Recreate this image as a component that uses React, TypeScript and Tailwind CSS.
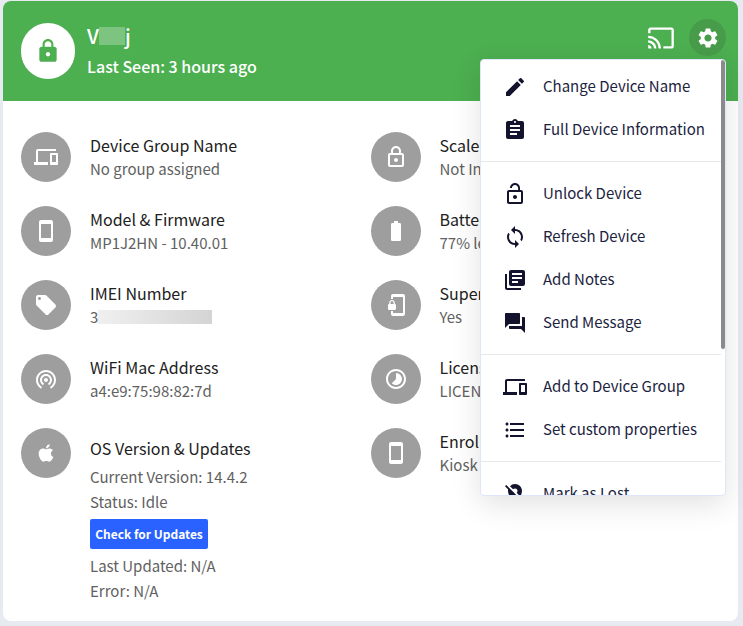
import React from 'react';
import { FaApple } from 'react-icons/fa';
import {
  MdAssignment,
  MdBatteryFull,
  MdCast,
  MdDevices,
  MdEdit,
  MdFormatListBulleted,
  MdLibraryBooks,
  MdLocalOffer,
  MdLock,
  MdLockOpen,
  MdLoop,
  MdLocationOff,
  MdOutlineLock,
  MdPhonelinkLock,
  MdQuestionAnswer,
  MdSettings,
  MdSmartphone,
  MdStayCurrentPortrait,
  MdTimelapse,
  MdWifiTethering,
} from 'react-icons/md';

type Info = { icon: React.ReactNode; title: string; value: React.ReactNode };

const leftRows: Info[] = [
  { icon: <MdDevices size={24} />, title: 'Device Group Name', value: 'No group assigned' },
  { icon: <MdSmartphone size={24} />, title: 'Model & Firmware', value: 'MP1J2HN - 10.40.01' },
  {
    icon: <MdLocalOffer size={24} />,
    title: 'IMEI Number',
    value: (
      <span className="flex items-center">
        3
        <span className="h-[14px] w-[114px] bg-gradient-to-r from-[#f0f0f0] to-[#d4d4d4]" />
      </span>
    ),
  },
  { icon: <MdWifiTethering size={24} />, title: 'WiFi Mac Address', value: 'a4:e9:75:98:82:7d' },
];

const rightRows: Info[] = [
  { icon: <MdOutlineLock size={24} />, title: 'Scale', value: 'Not Installed' },
  { icon: <MdBatteryFull size={24} />, title: 'Battery', value: '77% left' },
  { icon: <MdPhonelinkLock size={24} />, title: 'Supervised', value: 'Yes' },
  { icon: <MdTimelapse size={24} />, title: 'License', value: 'LICENSED' },
  { icon: <MdStayCurrentPortrait size={24} />, title: 'Enrollment', value: 'Kiosk' },
];

const menuGroups = [
  [
    { icon: <MdEdit size={24} />, label: 'Change Device Name' },
    { icon: <MdAssignment size={24} />, label: 'Full Device Information' },
  ],
  [
    { icon: <MdLockOpen size={24} />, label: 'Unlock Device' },
    { icon: <MdLoop size={24} />, label: 'Refresh Device' },
    { icon: <MdLibraryBooks size={24} />, label: 'Add Notes' },
    { icon: <MdQuestionAnswer size={24} />, label: 'Send Message' },
  ],
  [
    { icon: <MdDevices size={24} />, label: 'Add to Device Group' },
    { icon: <MdFormatListBulleted size={24} />, label: 'Set custom properties' },
  ],
  [{ icon: <MdLocationOff size={24} />, label: 'Mark as Lost' }],
];

const Row = ({ icon, title, value }: Info) => (
  <div className="flex h-[50px] items-center gap-[19px]">
    <div className="flex h-[50px] w-[50px] shrink-0 items-center justify-center rounded-full bg-[#9e9e9e] text-white">
      {icon}
    </div>
    <div className="whitespace-nowrap">
      <div className="text-[16px] leading-[23px] text-[#212121]">{title}</div>
      <div className="text-[15px] leading-[23px] text-[#616161]">{value}</div>
    </div>
  </div>
);

export default function App() {
  return (
    <div
      className="h-[626px] w-[743px] overflow-hidden bg-[#e8eaf2] pt-px pl-[3px]"
      style={{ fontFamily: '"Noto Sans CJK KR", sans-serif' }}
    >
      <div className="relative h-[620px] w-[735px] rounded-lg bg-white">
        {/* Header */}
        <div className="flex h-[100px] items-center justify-between rounded-t-lg bg-[#4caf50] pr-3 pl-[18px] text-white">
          <div className="flex items-center gap-3">
            <div className="flex h-[56px] w-[54px] items-center justify-center rounded-full bg-white text-[#4caf50]">
              <MdLock size={26} />
            </div>
            <div className="-mt-1">
              <div className="flex h-[30px] items-center text-[20px] font-medium">
                V<span className="h-[18px] w-[26px] bg-[#7cc47f]" />j
              </div>
              <div className="mt-[3px] text-[16px] font-medium">Last Seen: 3 hours ago</div>
            </div>
          </div>
          <div className="-mt-[27px] flex items-center gap-[14px]">
            <MdCast size={28} />
            <div className="flex h-[37px] w-[37px] items-center justify-center rounded-full bg-[#479c4a]">
              <MdSettings size={24} />
            </div>
          </div>
        </div>

        {/* Device details */}
        <div className="grid grid-cols-2 px-[18px] pt-[31px]">
          <div className="flex flex-col gap-6">
            {leftRows.map((r) => (
              <Row key={r.title} {...r} />
            ))}
            <div className="flex gap-[19px]">
              <div className="flex h-[50px] w-[50px] shrink-0 items-center justify-center rounded-full bg-[#9e9e9e] text-white">
                <FaApple size={20} />
              </div>
              <div className="text-[15px] leading-[24.5px] text-[#616161]">
                <div className="mb-[5px] pt-[9px] text-[16px] leading-[23px] text-[#212121]">OS Version &amp; Updates</div>
                <div>Current Version: 14.4.2</div>
                <div>Status: Idle</div>
                <button className="my-[5px] block h-[30px] w-[118px] rounded-[2px] bg-[#2962ff] text-[12px] font-bold text-white">
                  Check for Updates
                </button>
                <div>Last Updated: N/A</div>
                <div>Error: N/A</div>
              </div>
            </div>
          </div>
          <div className="flex flex-col gap-6">
            {rightRows.map((r) => (
              <Row key={r.title} {...r} />
            ))}
          </div>
        </div>

        {/* Settings menu */}
        <div className="absolute top-[58px] left-[477px] h-[437px] w-[246px] overflow-hidden rounded border border-[#dfe6fb] bg-white pt-[5px] pr-[4px] text-[15px] text-[#1c2340] shadow-[0_8px_30px_rgba(0,0,0,0.12)]">
          {menuGroups.map((group, i) => (
            <div key={i} className={i > 0 ? 'mt-[10px] border-t border-[#e8e8ec] pt-[10px]' : ''}>
              {group.map((item) => (
                <div key={item.label} className="flex h-[43px] items-center whitespace-nowrap">
                  <span className="flex w-[62px] shrink-0 justify-center pl-[5px] text-[#14132e]">{item.icon}</span>
                  {item.label}
                </div>
              ))}
            </div>
          ))}
          <div className="absolute top-0 right-0 h-[289px] w-[4px] rounded-sm bg-[#8a8a8a]" />
        </div>
      </div>
    </div>
  );
}
